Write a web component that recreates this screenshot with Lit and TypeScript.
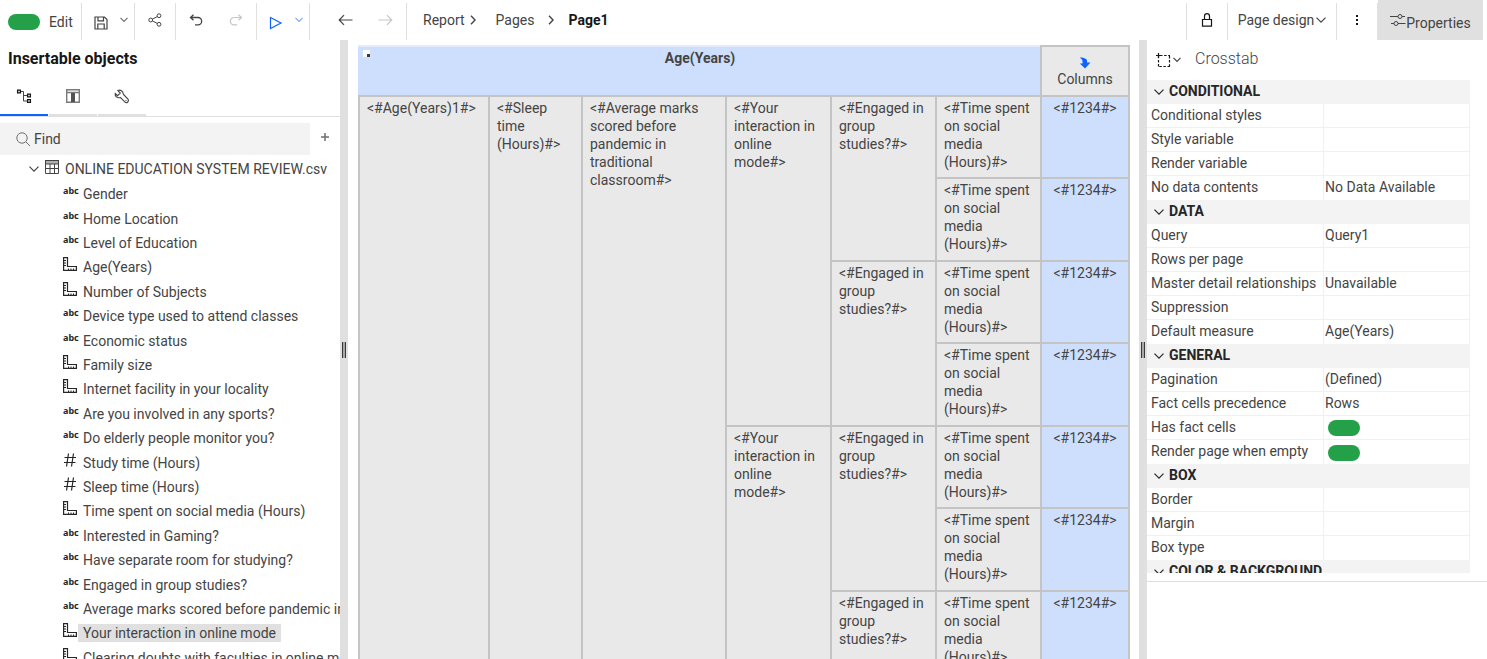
import { LitElement, html, css, svg, nothing, TemplateResult } from "lit";
import { customElement, property } from "lit/decorators.js";
import { classMap } from "lit/directives/class-map.js";

type FieldKind = "abc" | "ruler" | "hash";
interface Field { kind: FieldKind; label: string; selected?: boolean }
interface PropRow { label: string; value?: string; toggle?: boolean }
interface PropSection { title: string; rows: PropRow[] }
interface Cell { text: string; span: number; fact?: boolean }

const FIELDS: Field[] = [
  { kind: "abc", label: "Gender" },
  { kind: "abc", label: "Home Location" },
  { kind: "abc", label: "Level of Education" },
  { kind: "ruler", label: "Age(Years)" },
  { kind: "ruler", label: "Number of Subjects" },
  { kind: "abc", label: "Device type used to attend classes" },
  { kind: "abc", label: "Economic status" },
  { kind: "ruler", label: "Family size" },
  { kind: "ruler", label: "Internet facility in your locality" },
  { kind: "abc", label: "Are you involved in any sports?" },
  { kind: "abc", label: "Do elderly people monitor you?" },
  { kind: "hash", label: "Study time (Hours)" },
  { kind: "hash", label: "Sleep time (Hours)" },
  { kind: "ruler", label: "Time spent on social media (Hours)" },
  { kind: "abc", label: "Interested in Gaming?" },
  { kind: "abc", label: "Have separate room for studying?" },
  { kind: "abc", label: "Engaged in group studies?" },
  { kind: "abc", label: "Average marks scored before pandemic in traditional classroom" },
  { kind: "ruler", label: "Your interaction in online mode", selected: true },
  { kind: "ruler", label: "Clearing doubts with faculties in online mode" },
];

const SECTIONS: PropSection[] = [
  { title: "CONDITIONAL", rows: [
    { label: "Conditional styles" }, { label: "Style variable" }, { label: "Render variable" },
    { label: "No data contents", value: "No Data Available" } ] },
  { title: "DATA", rows: [
    { label: "Query", value: "Query1" }, { label: "Rows per page" },
    { label: "Master detail relationships", value: "Unavailable" }, { label: "Suppression" },
    { label: "Default measure", value: "Age(Years)" } ] },
  { title: "GENERAL", rows: [
    { label: "Pagination", value: "(Defined)" }, { label: "Fact cells precedence", value: "Rows" },
    { label: "Has fact cells", toggle: true }, { label: "Render page when empty", toggle: true } ] },
  { title: "BOX", rows: [ { label: "Border" }, { label: "Margin" }, { label: "Box type" } ] },
  { title: "COLOR & BACKGROUND", rows: [] },
];

const YOUR = "<#Your interaction in online mode#>";
const ENGAGED = "<#Engaged in group studies?#>";
const TIME = "<#Time spent on social media (Hours)#>";

function crosstabRows(): Cell[][] {
  const rows: Cell[][] = [];
  for (let i = 0; i < 8; i++) {
    const row: Cell[] = [];
    if (i === 0) {
      row.push({ text: "<#Age(Years)1#>", span: 8 });
      row.push({ text: "<#Sleep time (Hours)#>", span: 8 });
      row.push({ text: "<#Average marks scored before pandemic in traditional classroom#>", span: 8 });
    }
    if (i % 4 === 0) row.push({ text: YOUR, span: 4 });
    if (i % 2 === 0) row.push({ text: ENGAGED, span: 2 });
    row.push({ text: TIME, span: 1 });
    row.push({ text: "<#1234#>", span: 1, fact: true });
    rows.push(row);
  }
  return rows;
}

const icon = (w: number, h: number, body: TemplateResult | unknown) => html`<svg class="icon" width=${w} height=${h}
  viewBox="0 0 ${w} ${h}" fill="none" stroke="currentColor" aria-hidden="true">${body}</svg>`;

const chevronDown = (w = 10) => icon(w, 6, w === 10
  ? svg`<path d="M.5 .6 5 5.200 9.500 .6" stroke-width="1.200"/>`
  : svg`<path d="M.5 .8 4 4.500 7.500 .8" stroke-width="1.200"/>`);
const chevronRight = icon(6, 10, svg`<path d="M1 .8 5 5 1 9.200" stroke-width="1.400"/>`);

const ICONS = {
  save: icon(14, 14, svg`<path d="M1 1H10.500L13 3.500V13H1Z M4 1V4.800H9.500V1 M3.800 13V8H10.200V13" stroke-width="1.200"/>`),
  share: icon(14, 14, svg`<circle cx="11" cy="2.700" r="1.900"/><circle cx="2.700" cy="7" r="1.900"/><circle cx="11" cy="11.300" r="1.900"/><path d="M4.400 6.100 9.300 3.600M4.400 7.900 9.300 10.400"/>`),
  undo: icon(14, 12, svg`<path d="M4.500 .8 1.500 3.500 4.500 6.300M1.500 3.500H9A3.600 3.600 0 0 1 9 10.800H6" stroke-width="1.300"/>`),
  redo: icon(14, 12, svg`<path d="M9.500 .8 12.500 3.500 9.500 6.300M12.500 3.500H5A3.600 3.600 0 0 0 5 10.800H8" stroke-width="1.200"/>`),
  run: icon(14, 14, svg`<path d="M1.500 1.500 12 7 1.500 12.500Z" stroke-width="1.200"/>`),
  back: icon(15, 12, svg`<path d="M14.500 6H1.500M6 1.200 1.200 6 6 10.800" stroke-width="1.200"/>`),
  forward: icon(15, 12, svg`<path d="M.5 6H13.500M9 1.200 13.800 6 9 10.800" stroke-width="1.200"/>`),
  lock: icon(12, 14, svg`<path d="M1.500 6.500H10.500V13.200H1.500ZM3.500 6.500V3.200A2.500 2.500 0 0 1 8.500 3.200V6.500" stroke="#161616" stroke-width="1.200"/>`),
  dots: icon(4, 12, svg`<g fill="#161616" stroke="none"><rect x="1" y="1" width="2" height="2"/><rect x="1" y="5" width="2" height="2"/><rect x="1" y="9" width="2" height="2"/></g>`),
  sliders: icon(16, 14, svg`<path d="M0 3.500H8M12 3.500H15M1 10.500H4M8 10.500H15.500"/><circle cx="10" cy="3.500" r="2"/><circle cx="6" cy="10.500" r="2"/>`),
  tree: icon(16, 14, svg`<path d="M1.600 1.100H4.400V3.900H1.600ZM11.600 5.100H14.400V7.900H11.600ZM11.600 10.600H14.400V13.400H11.600Z" stroke="#161616" stroke-width="1.300"/><path d="M5 2.500H7.500V12H11M7.500 6.500H11"/>`),
  columns: icon(14, 14, svg`<path d="M.7 .7H13.300V13.300H.7ZM.7 3.500H13.300" stroke-width="1.400" stroke="#7a7a7a"/><rect x="5" y="4" width="4" height="9" fill="#525252" stroke="none"/>`),
  wrench: icon(16, 15, svg`<path d="M1.200 4.500 3.600 6.700 6.300 4 3.900 1.600C6.200 .4 9.200 1.800 9.300 5.200L14.200 10.400C15.200 12.300 13 14.500 11.200 13.300L6.300 8.400C3.500 9.400 .6 7.300 1.200 4.500ZM11.500 11.500H12.500" stroke-width="1.100"/>`),
  search: icon(15, 15, svg`<circle cx="6" cy="6" r="5.200"/><path d="M9.800 9.800 14 14"/>`),
  plus: icon(10, 10, svg`<path d="M5 1V9M1 5H9" stroke-width="1.500" stroke="#6f6f6f"/>`),
  table: icon(14, 14, svg`<rect x=".5" y=".5" width="13" height="3.500" fill="#b0b0b0"/><path d="M.5 4V13.500H13.500V4M.5 8.500H13.500M5 4V13.500M9.500 4V13.500"/>`),
  ruler: icon(14, 14, svg`<path d="M.6 .6H4.500V9.500H13.400V13.400H.6Z" stroke-width="1.200"/><path d="M1 3.500H3M1 6H3M1 8.500H3M5.500 13V11.500M8 13V11.500M10.500 13V11.500"/>`),
  hash: icon(14, 14, svg`<path d="M5.500 .5 3.500 13.500M10.500 .5 8.500 13.500M1.500 4.500H13M1 9.500H12.500" stroke-width="1.200"/>`),
  select: icon(15, 14, svg`<path d="M4 2.500H14M13.500 3V13.500M14 13.500H2M2.500 13.500V3" stroke="#161616" stroke-width="1.200" stroke-dasharray="2.500 1.600"/><path d="M0 2.500H4.500M2.500 0V5" stroke="#161616" stroke-width="1.200"/>`),
  turn: html`<svg class="icon" width="12" height="12" viewBox="0 0 12 12" aria-hidden="true"><path d="M.8 .8C3 0 6.500 1 8 3V5.500H11.500L6 11.500 .8 6.500H3.500C4 4 3 2 .8 .8Z" fill="#0f62fe"/></svg>`,
};

const base = css`
  * { box-sizing: border-box; }
  .icon { display: block; flex: none; overflow: visible; }
  button, input, a { font: inherit; color: inherit; }
  button { border: 0; background: none; padding: 0; display: flex; align-items: center; cursor: pointer; }
  h1, h2 { margin: 0; }
  table { border-spacing: 0; table-layout: fixed; width: 100%; }
  .switch { appearance: none; margin: 0; display: block; flex: none; width: 32px; height: 16px; border-radius: 8px; background: #24a148; }
`;

@customElement("top-toolbar")
export class TopToolbar extends LitElement {
  static styles = [base, css`
    :host { display: flex; height: 40px; background: #fff; }
    .group { display: flex; align-items: center; margin-top: 3px; border-right: 1px solid #e0e0e0; padding-bottom: 3px; }
    .mode { width: 82px; padding: 0 0 0 8px; gap: 9px; }
    .split { width: 53px; padding-left: 12px; gap: 12px; }
    .single { width: 41px; justify-content: center; }
    .pair { width: 81px; padding-left: 13px; gap: 26px; }
    .nav { width: 97px; padding-left: 28px; gap: 25px; }
    .low { padding-top: 6px; }
    .muted { color: #c6c6c6; }
    .grey { color: #6f6f6f; }
    .blue { color: #0f62fe; }
    .soft { color: #78a9ff; }
    .crumbs { display: flex; align-items: center; flex: 1; padding-left: 16px; white-space: nowrap; }
    .crumbs ol { display: flex; list-style: none; margin: 0; padding: 0; }
    .crumbs li { display: flex; align-items: center; gap: 5px; }
    .crumbs li + li { margin-left: 20px; gap: 14px; }
    .crumbs li:last-child { margin-left: 14px; font-weight: 700; color: #161616; }
    .crumbs a { text-decoration: none; }
    .first { border-left: 1px solid #e0e0e0; width: 42px; }
    .design { width: 109px; justify-content: center; white-space: nowrap; }
    .design button { gap: 2px; }
    .props { width: 105px; margin-right: 4px; background: #e0e0e0; justify-content: center; padding-top: 5px; }
    .props .icon { margin-bottom: 5px; }
  `];
  render() {
    return html`
      <div class="group mode"><input class="switch" type="checkbox" role="switch" id="edit" checked><label for="edit">Edit</label></div>
      <div class="group split"><button class="low" aria-label="Save">${ICONS.save}</button><button class="grey" aria-label="Save options">${chevronDown(8)}</button></div>
      <div class="group single"><button aria-label="Share">${ICONS.share}</button></div>
      <div class="group pair"><button aria-label="Undo">${ICONS.undo}</button><button class="muted" aria-label="Redo">${ICONS.redo}</button></div>
      <div class="group split"><button class="blue low" aria-label="Run">${ICONS.run}</button><button class="soft" aria-label="Run options">${chevronDown(8)}</button></div>
      <div class="group nav"><button aria-label="Back">${ICONS.back}</button><button class="muted" aria-label="Forward">${ICONS.forward}</button></div>
      <nav class="crumbs" aria-label="Breadcrumb"><ol>
        <li><a href="#report">Report</a>${chevronRight}</li>
        <li><a href="#pages">Pages</a>${chevronRight}</li>
        <li>Page1</li>
      </ol></nav>
      <div class="group single first"><button aria-label="Lock">${ICONS.lock}</button></div>
      <div class="group design"><button>Page design${chevronDown()}</button></div>
      <div class="group single"><button aria-label="More">${ICONS.dots}</button></div>
      <button class="props">${ICONS.sliders}<span>Properties</span></button>`;
  }
}

@customElement("object-panel")
export class ObjectPanel extends LitElement {
  static styles = [base, css`
    :host { display: flex; flex-direction: column; overflow: hidden; min-width: 0; }
    h1 { font-size: 16px; line-height: 38px; font-weight: 700; padding-left: 8px; color: #161616; }
    .tabs { display: flex; gap: 1px; border-bottom: 1px solid #e0e0e0; }
    .tab { width: 48px; height: 38px; justify-content: center; border-bottom: 2px solid #e0e0e0; }
    .active { border-color: #0f62fe; }
    .find { display: flex; align-items: center; margin-top: 6px; height: 32px; flex: none; }
    .field { flex: 1; display: flex; align-items: center; gap: 3px; height: 32px; padding-left: 16px; background: #f3f3f3; color: #6f6f6f; }
    .field input { flex: 1; min-width: 0; border: 0; padding: 0; background: none; outline: 0; color: #444; }
    .field input::placeholder { color: #444; opacity: 1; }
    .add { width: 30px; height: 32px; justify-content: center; padding-bottom: 4px; }
    .root { display: flex; align-items: center; flex: none; height: 27px; padding: 1px 0 0 29px; gap: 6px; white-space: nowrap; }
    .root .label { padding: 0; }
    .root .icon + .icon { margin-bottom: 4px; }
    .tree { display: grid; grid-auto-rows: 1fr; height: 488px; flex: none; list-style: none; margin: 0; padding: 0 0 0 63px; white-space: nowrap; }
    .tree li { display: flex; align-items: center; gap: 1px; }
    .kind { width: 14px; margin-bottom: 6px; flex: none; color: #262626; }
    .abc { font: 700 9px/12px "Noto Sans", sans-serif; }
    .label { padding: 0 5px; line-height: 18px; }
    .selected { background: #e0e0e0; }
  `];
  render() {
    return html`
      <h1>Insertable objects</h1>
      <div class="tabs" role="tablist">
        <button class="tab active" role="tab" aria-selected="true" aria-label="Source">${ICONS.tree}</button>
        <button class="tab" role="tab" aria-label="Data items">${ICONS.columns}</button>
        <button class="tab" role="tab" aria-label="Toolbox">${ICONS.wrench}</button>
      </div>
      <div class="find">
        <label class="field">${ICONS.search}<input type="text" placeholder="Find" aria-label="Find"></label>
        <button class="add" aria-label="Add">${ICONS.plus}</button>
      </div>
      <div class="root">${chevronDown()}${ICONS.table}<span class="label">ONLINE EDUCATION SYSTEM REVIEW.csv</span></div>
      <ul class="tree">
        ${FIELDS.map(f => html`<li>
          <span class="kind ${f.kind}">${f.kind === "abc" ? "abc" : ICONS[f.kind]}</span>
          <span class=${classMap({ label: true, selected: !!f.selected })}>${f.label}</span>
        </li>`)}
      </ul>`;
  }
}

@customElement("panel-splitter")
export class PanelSplitter extends LitElement {
  static styles = css`
    :host { display: flex; align-items: center; justify-content: center; background: #e0e0e0; cursor: col-resize; }
    .grip { width: 4px; height: 16px; background: #a8a8a8; border: solid #393939; border-width: 0 1px; box-sizing: border-box; }
  `;
  render() { return html`<div class="grip"></div>`; }
}

@customElement("crosstab-canvas")
export class CrosstabCanvas extends LitElement {
  static styles = [base, css`
    :host { display: block; overflow: hidden; padding: 5px 10px 0; min-width: 0; }
    table { border-collapse: collapse; color: #444; }
    .w130 { width: 130px; } .w93 { width: 93px; } .w144 { width: 144px; } .w105 { width: 105px; } .w88 { width: 88px; }
    th, td { border: 2px solid #c4c4c4; padding: 2px 7px; vertical-align: top; text-align: left; font-weight: inherit; line-height: 18px; background: #e9e9e9; }
    thead th { height: 50px; }
    tbody tr { height: 82px; }
    tbody tr:nth-child(even) { height: 83px; }
    .title { position: relative; background: #cedffe; text-align: center; font-weight: 700; border-top-color: #e4ecfb; border-left-color: #cedffe; }
    .marker { position: absolute; left: 3px; top: 3px; width: 7px; height: 7px; background: #fff; }
    .marker::after { content: ""; position: absolute; right: 0; bottom: 0; width: 3px; height: 3px; background: #393939; }
    .columns { padding: 10px 0 0; text-align: center; }
    .columns .icon { margin: 0 auto 1px; }
    .fact { background: #cedffe; text-align: center; }
  `];
  render() {
    return html`<table>
      <colgroup><col class="w130"><col class="w93"><col class="w144"><col class="w105"><col class="w105"><col class="w105"><col class="w88"></colgroup>
      <thead><tr>
        <th class="title" colspan="6"><span class="marker"></span>Age(Years)</th>
        <th class="columns">${ICONS.turn}Columns</th>
      </tr></thead>
      <tbody>${crosstabRows().map(r => html`<tr>${r.map(c => html`<td class=${c.fact ? "fact" : nothing} rowspan=${c.span}>${c.text}</td>`)}</tr>`)}</tbody>
    </table>`;
  }
}

@customElement("property-section")
export class PropertySection extends LitElement {
  @property({ attribute: false }) section!: PropSection;
  static styles = [base, css`
    :host { display: block; }
    h2 { font-size: 14px; font-weight: 700; height: 24px; background: #f3f3f3; }
    h2 button { gap: 5px; padding: 0 7px; height: 24px; color: #262626; white-space: nowrap; }
    h2 span { margin-bottom: 2px; }
    .label { width: 177px; }
    tr { height: 24px; }
    th, td { padding: 0 4px 2px; height: 24px; text-align: left; font-weight: inherit; line-height: 20px; border-bottom: 1px solid #f0f0f0; border-right: 1px solid #f0f0f0; white-space: nowrap; }
    td { padding-left: 1px; }
    .switch { margin: 3px 0 0 3px; }
    tr:last-child > * { border-bottom: 0; }
  `];
  render() {
    return html`<h2><button aria-expanded="true">${chevronDown()}<span>${this.section.title}</span></button></h2>
      <table><colgroup><col class="label"><col></colgroup><tbody>
        ${this.section.rows.map(r => html`<tr><th scope="row">${r.label}</th>
          <td>${r.toggle ? html`<input class="switch" type="checkbox" role="switch" checked aria-label=${r.label}>` : r.value ?? nothing}</td></tr>`)}
      </tbody></table>`;
  }
}

@customElement("property-panel")
export class PropertyPanel extends LitElement {
  static styles = [base, css`
    :host { display: flex; flex-direction: column; overflow: hidden; }
    header { display: flex; align-items: center; height: 40px; flex: none; padding: 0 0 2px 9px; }
    header button { gap: 2px; width: 39px; padding-top: 2px; }
    h1 { font-size: 16px; font-weight: 300; }
    .list { flex: 1; min-height: 0; overflow: hidden; margin: 0 17px 8px 0; }
    footer { height: 78px; flex: none; border-top: 1px solid #e0e0e0; }
  `];
  render() {
    return html`
      <header><button aria-label="Select ancestor">${ICONS.select}${chevronDown(8)}</button><h1>Crosstab</h1></header>
      <div class="list">${SECTIONS.map(s => html`<property-section .section=${s}></property-section>`)}</div>
      <footer></footer>`;
  }
}

@customElement("app-root")
export class AppRoot extends LitElement {
  static styles = css`
    :host { display: flex; flex-direction: column; height: 100vh; overflow: hidden; background: #fff; color: #444; font: 14px/20px Roboto, "Liberation Sans", sans-serif; }
    .workspace { flex: 1; min-height: 0; display: grid; grid-template: minmax(0, 1fr) / 340px 8px minmax(0, 1fr) 8px 340px; }
  `;
  render() {
    return html`<top-toolbar></top-toolbar>
      <main class="workspace">
        <object-panel></object-panel><panel-splitter></panel-splitter>
        <crosstab-canvas></crosstab-canvas><panel-splitter></panel-splitter>
        <property-panel></property-panel>
      </main>`;
  }
}
